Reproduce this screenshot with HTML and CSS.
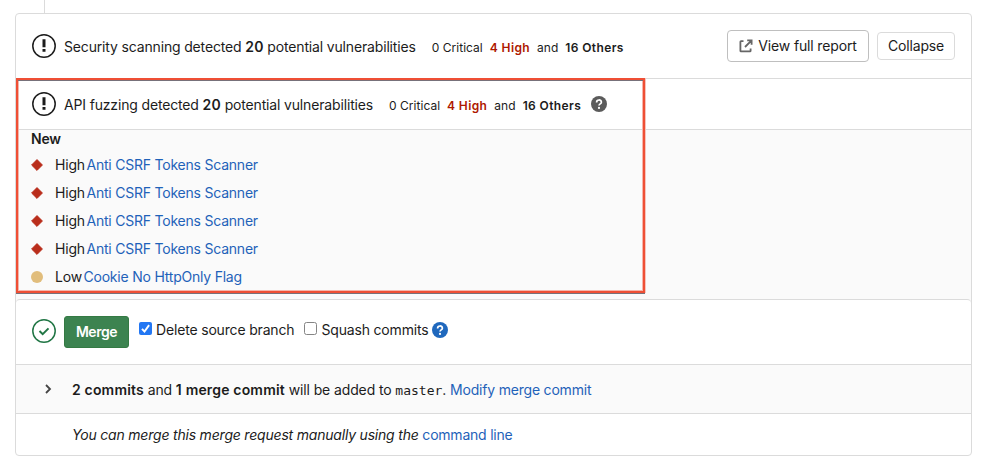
FILE: index.html
```html
<!DOCTYPE html>
<html lang="en">
<head>
<meta charset="utf-8">
<title>Merge request</title>
<link rel="stylesheet" href="styles.css">
</head>
<body>
<div class="connector"></div>
<main class="panel">
  <section class="row security">
    <svg class="status" viewBox="0 0 24 24"><circle cx="12" cy="12" r="11.2" fill="none" stroke="currentColor" stroke-width="1.5"/><path d="M10.5 5.2h3v8h-3zM10.5 15h3v2.8h-3z" fill="currentColor"/></svg>
    <span class="title">Security scanning detected <b>20</b> potential vulnerabilities</span>
    <span class="counts"><span>0 Critical</span><b class="high">4 High</b><span>and</span><b>16 Others</b></span>
    <div class="actions">
      <button class="btn full"><svg class="external" viewBox="0 0 14 14" fill="none" stroke="currentColor" stroke-width="1.8"><path d="M4.5 2.2H2q-.6 0-.6.6v9q0 .6.6.6h9q.6 0 .6-.6V9.5M8.2 1.4h4.4v4.4M12.4 1.6 6 8"/></svg>View full report</button>
      <button class="btn collapse">Collapse</button>
    </div>
  </section>
  <section class="row fuzzing">
    <svg class="status" viewBox="0 0 24 24"><circle cx="12" cy="12" r="11.2" fill="none" stroke="currentColor" stroke-width="1.5"/><path d="M10.5 5.2h3v8h-3zM10.5 15h3v2.8h-3z" fill="currentColor"/></svg>
    <span class="title">API fuzzing detected <b>20</b> potential vulnerabilities</span>
    <span class="counts"><span>0 Critical</span><b class="high">4 High</b><span>and</span><b>16 Others</b></span>
    <svg class="help gray" viewBox="0 0 16 16"><circle cx="8" cy="8" r="8" fill="currentColor"/><path d="M5.6 6.4C5.6 3.2 10.4 3.2 10.4 6.2 10.4 7.9 8 7.9 8 9.6" fill="none" stroke="#fff" stroke-width="1.7"/><circle cx="8" cy="11.9" r="1.1" fill="#fff"/></svg>
  </section>
  <section class="findings">
    <h2>New</h2>
    <ul>
      <li><svg class="severity" viewBox="0 0 12 12"><path d="M6 .6 11.4 6 6 11.4.6 6z" fill="#b92d1b" stroke="#b92d1b" stroke-width="1" stroke-linejoin="round"/></svg><span>High</span><a>Anti CSRF Tokens Scanner</a></li>
      <li><svg class="severity" viewBox="0 0 12 12"><path d="M6 .6 11.4 6 6 11.4.6 6z" fill="#b92d1b" stroke="#b92d1b" stroke-width="1" stroke-linejoin="round"/></svg><span>High</span><a>Anti CSRF Tokens Scanner</a></li>
      <li><svg class="severity" viewBox="0 0 12 12"><path d="M6 .6 11.4 6 6 11.4.6 6z" fill="#b92d1b" stroke="#b92d1b" stroke-width="1" stroke-linejoin="round"/></svg><span>High</span><a>Anti CSRF Tokens Scanner</a></li>
      <li><svg class="severity" viewBox="0 0 12 12"><path d="M6 .6 11.4 6 6 11.4.6 6z" fill="#b92d1b" stroke="#b92d1b" stroke-width="1" stroke-linejoin="round"/></svg><span>High</span><a>Anti CSRF Tokens Scanner</a></li>
      <li><svg class="severity" viewBox="0 0 12 12"><circle cx="6" cy="6" r="6" fill="#e1bd7c"/></svg><span>Low</span><a>Cookie No HttpOnly Flag</a></li>
    </ul>
  </section>
  <div class="merge-wrap">
  <section class="merge">
    <svg class="status green" viewBox="0 0 24 24" fill="none" stroke="currentColor"><circle cx="12" cy="12" r="11.2" stroke-width="1.5"/><path d="m7.5 12 3.2 3.2 5.8-5.8" stroke-width="2"/></svg>
    <button class="merge-btn">Merge</button>
    <label class="option delete"><svg class="check" viewBox="0 0 13 13"><rect width="13" height="13" rx="2" fill="#2377f3"/><path d="m3 6.8 2.5 2.8 4.6-6.5" fill="none" stroke="#fff" stroke-width="1.9"/></svg><span>Delete source branch</span></label>
    <label class="option squash"><svg class="check" viewBox="0 0 13 13"><rect x=".5" y=".5" width="12" height="12" rx="2" fill="#fff" stroke="#858585"/></svg><span>Squash commits</span></label>
    <svg class="help blue" viewBox="0 0 16 16"><circle cx="8" cy="8" r="8" fill="currentColor"/><path d="M5.6 6.4C5.6 3.2 10.4 3.2 10.4 6.2 10.4 7.9 8 7.9 8 9.6" fill="none" stroke="#fff" stroke-width="1.7"/><circle cx="8" cy="11.9" r="1.1" fill="#fff"/></svg>
  </section>
  </div>
  <section class="commits">
    <svg class="chevron" viewBox="0 0 10 10" fill="none" stroke="currentColor" stroke-width="1.8"><path d="m3 1 4 4-4 4"/></svg>
    <span class="summary"><b>2 commits</b> and <b>1 merge commit</b> will be added to <code>master</code>. <a>Modify merge commit</a></span>
  </section>
  <section class="manual"><span><em>You can merge this merge request manually using the</em> <a>command line</a></span></section>
  <div class="highlight"></div>
</main>
</body>
</html>
```
FILE: styles.css
```css
* { box-sizing: border-box; }
body { margin: 0; height: 465px; overflow: hidden; background: #fff; color: #1c1c1c; font: 14px/20px Inter, "Liberation Sans", sans-serif; letter-spacing: -.17px; }
b { font-weight: 600; letter-spacing: .04px; }
a { color: #1f62b9; }
svg { display: block; flex: none; }
span, a, label, button { white-space: nowrap; }
.connector { width: 1px; height: 13px; margin-left: 44px; background: #dbdbdb; }
.panel { position: relative; width: 957px; height: 443px; margin-left: 15px; border: 1px solid #dbdbdb; border-radius: 4px; }
.row { display: flex; align-items: center; padding-left: 16px; border-bottom: 1px solid #dbdbdb; }
.security { height: 65px; padding-right: 16px; }
.fuzzing { height: 51px; }
.status { width: 24px; height: 24px; margin-right: 8px; }
.title { padding-top: 2px; letter-spacing: -.16px; }
.title b { letter-spacing: .2px; }
.counts { display: flex; margin-left: 16px; gap: 7px; padding-top: 3px; font-size: 12px; letter-spacing: .03px; }
.counts b { letter-spacing: .38px; }
.counts .high { color: #ae1800; }
.actions { display: flex; align-items: center; gap: 8px; margin-left: auto; }
.btn { display: flex; align-items: center; justify-content: center; padding: 0; background: #fff; color: #1c1c1c; font: inherit; letter-spacing: -.15px; border: 1px solid #dbdbdb; border-radius: 4px; }
.full { width: 142px; height: 32px; border-color: #bfbfbf; gap: 5px; }
.collapse { width: 78px; height: 28px; }
.external { width: 14px; height: 14px; color: #666; }
.help { width: 16px; height: 16px; }
.gray { color: #5b5b5b; margin-left: 10px; }
.blue { color: #1f68bd; margin-top: -4px; }
.findings { height: 169px; background: #fafafa; padding-left: 15px; }
.findings h2 { margin: 0; font-size: 14px; line-height: 18px; font-weight: 600; }
.findings ul { list-style: none; margin: 3px 0 0; padding: 0; }
.findings li { display: flex; align-items: center; height: 28px; }
.findings li span { letter-spacing: -.17px; }
.findings a { margin-left: 1.5px; letter-spacing: -.22px; }
.severity { width: 12px; height: 12px; margin-right: 12px; }
.merge-wrap { background: #fafafa; }
.merge { display: flex; height: 66px; padding: 0 0 0 16px; align-items: center; background: #fff; border-top: 1px solid #dbdbdb; border-bottom: 1px solid #dbdbdb; border-radius: 4px 4px 0 0; }
.green { color: #217645; margin-top: -2px; }
.merge-btn { width: 65px; height: 32px; margin: 0 10px 0 0; padding: 0; border: 1px solid #347a43; border-radius: 3px; background: #3c8350; color: #fff; font: 600 14px/20px Inter, sans-serif; letter-spacing: -.45px; }
.option { display: flex; align-items: center; gap: 4px; margin-top: -4px; }
.delete { margin-right: 10px; }
.squash { margin-right: 3px; }
.check { width: 13px; height: 13px; margin-top: -3px; }
.commits { display: flex; align-items: center; height: 49px; padding: 0 0 0 27px; background: #fafafa; border-bottom: 1px solid #dbdbdb; }
.summary { padding-top: 2px; letter-spacing: -.12px; }
.summary b { letter-spacing: .17px; }
.summary a { letter-spacing: -.2px; }
.chevron { width: 10px; height: 10px; margin-right: 19px; color: #444; }
code { font: 13px/18px "DejaVu Sans Mono", monospace; letter-spacing: 0; }
.manual { display: flex; align-items: center; height: 41px; padding-left: 56px; }
.manual em { letter-spacing: -.2px; }
.manual a { letter-spacing: -.22px; }
.highlight { position: absolute; left: 0; top: 64px; width: 629px; height: 215px; border: 2px solid #ef4f35; box-shadow: 0 1px 0 #77717a, inset 0 1px 0 #77717a, inset 0 0 0 1px #f5b5aa, 1px 0 0 #f5c5bd; }
```
